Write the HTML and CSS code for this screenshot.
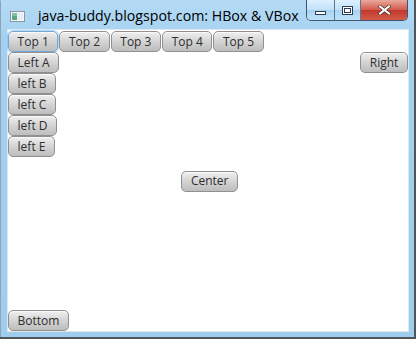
FILE: index.html
```html
<!DOCTYPE html>
<html lang="en">
<head>
  <meta charset="UTF-8" />
  <title>java-buddy.blogspot.com: HBox &amp; VBox</title>
  <link rel="stylesheet" href="styles.css">
</head>
<body>
  <div class="window">
    <!-- title bar -->
    <div class="titlebar">
      <svg class="app-icon" width="15" height="11" viewBox="0 0 15 11">
        <rect x="0.5" y="0.5" width="14" height="10" fill="#f4f6f8" stroke="#8a96a2"/>
        <rect x="2" y="2" width="5" height="7" fill="#5aa48a"/>
        <rect x="2" y="2" width="5" height="3" fill="#7fc0a6"/>
        <rect x="7" y="2" width="6" height="7" fill="#e8eef4"/>
      </svg>
      <span class="title">java-buddy.blogspot.com: HBox &amp; VBox</span>
      <div class="controls">
        <div class="ctl ctl-min"><span class="min-glyph"></span></div>
        <div class="ctl ctl-max"><span class="max-glyph"></span></div>
        <div class="ctl ctl-close">
          <svg width="13" height="10" viewBox="0 0 13 10">
            <path d="M2 1.5 L11 8.5 M11 1.5 L2 8.5" stroke="#3a2a2a" stroke-width="3.4" stroke-linecap="square"/>
            <path d="M2 1.5 L11 8.5 M11 1.5 L2 8.5" stroke="#fff" stroke-width="2" stroke-linecap="square"/>
          </svg>
        </div>
      </div>
    </div>

    <!-- scene: border pane -->
    <div class="scene">
      <div class="pane-top">
        <button class="fx-btn focused">Top 1</button>
        <button class="fx-btn">Top 2</button>
        <button class="fx-btn">Top 3</button>
        <button class="fx-btn">Top 4</button>
        <button class="fx-btn">Top 5</button>
      </div>
      <div class="pane-left">
        <button class="fx-btn">Left A</button>
        <button class="fx-btn">left B</button>
        <button class="fx-btn">left C</button>
        <button class="fx-btn">left D</button>
        <button class="fx-btn">left E</button>
      </div>
      <div class="pane-center">
        <button class="fx-btn">Center</button>
      </div>
      <div class="pane-right">
        <button class="fx-btn">Right</button>
      </div>
      <div class="pane-bottom">
        <button class="fx-btn">Bottom</button>
      </div>
    </div>
  </div>
</body>
</html>
```

FILE: styles.css
```css
* {
  box-sizing: border-box;
}

body {
  margin: 0;
  width: 416px;
  height: 339px;
  background: #50555a;
  overflow: hidden;
}

.window {
  width: 414px;
  height: 337px;
  background: linear-gradient(#b4dbf5, #a3d0f0 40px, #9fcdee);
  border-left: 1px solid #8da4b8;
  border-top: 1px solid #b8d8ee;
}

/* title bar */
.titlebar {
  height: 29px;
  display: flex;
  align-items: flex-start;
  position: relative;
}

.app-icon {
  margin-top: 10px;
  margin-left: 9px;
}

.title {
  margin-left: 13px;
  margin-top: 5px;
  font-family: "Open Sans", sans-serif;
  font-size: 14.2px;
  color: #000;
  white-space: nowrap;
}

.controls {
  position: absolute;
  top: -1px;
  right: 6px;
  display: flex;
  height: 21px;
  border: 1px solid #3f5670;
  border-top: none;
  border-radius: 0 0 5px 5px;
  overflow: hidden;
}

.ctl {
  height: 20px;
  display: flex;
  align-items: center;
  justify-content: center;
}

.ctl-min, .ctl-max {
  background: linear-gradient(#dcefff, #c2e0f7 50%, #a9d2f1 51%, #bfe2f8);
  border-right: 1px solid #5d7891;
}

.ctl-min {
  width: 28px;
}

.ctl-max {
  width: 26px;
}

.ctl-close {
  width: 46px;
  background: linear-gradient(#e9a99c, #d2594b 50%, #c0392b 51%, #d65a48);
}

.min-glyph {
  width: 11px;
  height: 4px;
  margin-top: 5px;
  background: #fff;
  border: 1px solid #2c3e55;
}

.max-glyph {
  width: 11px;
  height: 9px;
  border: 1px solid #2c3e55;
  background: #fff;
  box-shadow: inset 0 0 0 1px #fff, inset 0 0 0 2px #2c3e55;
}

/* scene */
.scene {
  margin-left: 7px;
  width: 400px;
  height: 301px;
  padding-top: 1px;
  background: #fff;
  box-shadow: 0 0 0 1px #dfe6ec;
  display: grid;
  grid-template-columns: auto 1fr auto;
  grid-template-rows: auto 1fr auto;
}

.pane-top {
  grid-column: 1 / -1;
  display: flex;
  gap: 1px;
}

.pane-left {
  display: flex;
  flex-direction: column;
  align-items: flex-start;
}

.pane-center {
  display: flex;
  align-items: center;
  justify-content: center;
}

.pane-right {
  align-self: start;
}

.pane-bottom {
  grid-column: 1 / -1;
}

.fx-btn {
  height: 21px;
  padding: 0 8.6px;
  margin: 0;
  font-family: "Open Sans", sans-serif;
  font-size: 12px;
  color: #2e2e2e;
  border: 1px solid #909090;
  border-radius: 5px;
  background: linear-gradient(#f0f0f0, #d6d6d6 45%, #bdbdbd);
  box-shadow: inset 0 1px 0 #fafafa;
  line-height: 18px;
}

.fx-btn.focused {
  border-color: #6fa7d6;
  box-shadow: inset 0 1px 0 #fafafa, 0 0 0 1px rgba(40, 140, 230, 0.35);
}
```
